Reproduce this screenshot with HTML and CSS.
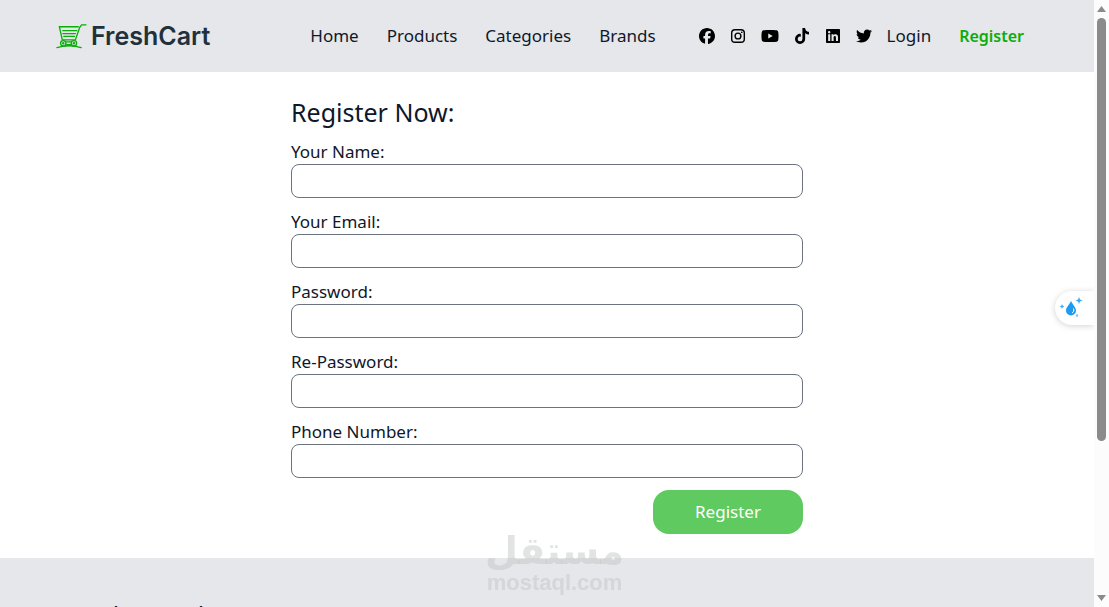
FILE: index.html
```html
<!DOCTYPE html>
<html lang="en">
	<head>
		<meta charset="UTF-8">
		<title>FreshCart</title>
		<link rel="stylesheet" href="styles.css">
	</head>
	<body>
		<div class="page">
			<header class="navbar">
				<a class="logo" href="#">
					<svg width="31" height="26" viewBox="0 0 32 26" fill="none" stroke="#0aad0a" stroke-width="1.4" stroke-linecap="round">
						<path d="M31 1.500h-4.500l-2 2.500-4.500 13H6.500L3.500 3.500H23"/>
						<path d="M7 7.500h14.500M7 10.500h13M8 13.500h11" stroke-width="1.300"/>
						<circle cx="7.500" cy="20.500" r="2.800"/>
						<circle cx="18.500" cy="20.500" r="2.800"/>
						<circle cx="7.500" cy="20.500" r=".6"/>
						<circle cx="18.500" cy="20.500" r=".6"/>
						<path d="M11 19h4.500M11 22h4.500M1 25c7-2.400 18-2.400 25 0"/>
					</svg>
					<span>FreshCart</span>
				</a>
				<nav class="menu">
					<a href="#">Home</a>
					<a href="#">Products</a>
					<a href="#">Categories</a>
					<a href="#">Brands</a>
				</nav>
				<div class="social">
					<a href="#" aria-label="Facebook"><svg viewBox="0 0 512 512"><path d="M512 256C512 114.600 397.400 0 256 0S0 114.600 0 256c0 120 82.700 220.800 194.200 248.500V334.200h-52.800V256h52.800v-33.700c0-87.100 39.400-127.500 125-127.500 16.200 0 44.200 3.200 55.700 6.400V172c-6-.6-16.500-1-29.600-1-42 0-58.200 15.900-58.200 57.200V256h83.600l-14.400 78.200h-69.300v175.900C413.800 494.800 512 386.900 512 256z"/></svg></a>
					<a href="#" aria-label="Instagram"><svg viewBox="0 0 512 512" fill="none" stroke="#000" stroke-width="45"><rect x="54" y="54" width="404" height="404" rx="105"/><circle cx="256" cy="256" r="93"/><circle cx="376" cy="136" r="27" fill="#000" stroke="none"/></svg></a>
					<a href="#" aria-label="YouTube"><svg class="wide" viewBox="0 0 576 512"><path d="M549.700 124.100c-6.300-23.700-24.800-42.300-48.300-48.600C458.800 64 288 64 288 64S117.200 64 74.600 75.500c-23.500 6.300-42 24.900-48.300 48.600-11.400 42.900-11.400 132.300-11.400 132.300s0 89.400 11.400 132.300c6.300 23.700 24.800 41.500 48.300 47.800C117.200 448 288 448 288 448s170.800 0 213.400-11.500c23.500-6.300 42-24.200 48.300-47.800 11.400-42.900 11.400-132.300 11.400-132.300s0-89.400-11.400-132.300zm-317.500 213.500V175.200l142.700 81.200-142.700 81.200z"/></svg></a>
					<a href="#" aria-label="TikTok"><svg viewBox="0 0 448 512"><path d="M448 209.900a210.100 210.100 0 0 1-122.800-39.300v178.800A162.600 162.600 0 1 1 185 188.300v89.900a74.600 74.600 0 1 0 52.200 71.200V0h88a121.200 121.200 0 0 0 1.900 22.200 122.200 122.200 0 0 0 53.900 80.200 121.400 121.400 0 0 0 67 20.100z"/></svg></a>
					<a href="#" aria-label="LinkedIn"><svg viewBox="0 0 448 512"><path d="M416 32H31.900C14.300 32 0 46.500 0 64.300v383.400C0 465.500 14.300 480 31.900 480H416c17.600 0 32-14.500 32-32.300V64.300c0-17.800-14.400-32.300-32-32.300zM135.400 416H69V202.200h66.500V416zm-33.200-243c-21.300 0-38.500-17.300-38.500-38.500S80.900 96 102.200 96c21.200 0 38.500 17.300 38.500 38.500 0 21.300-17.200 38.500-38.500 38.500zm282.100 243h-66.400V312c0-24.800-.5-56.700-34.500-56.700-34.600 0-39.900 27-39.900 54.900V416h-66.400V202.200h63.700v29.200h.9c8.900-16.800 30.600-34.500 62.900-34.500 67.200 0 79.700 44.300 79.700 101.900V416z"/></svg></a>
					<a href="#" aria-label="Twitter"><svg viewBox="0 0 512 512"><path d="M459.400 151.700c.3 4.500.3 9.100.3 13.600 0 138.700-105.600 298.600-298.600 298.600-59.500 0-114.700-17.200-161.100-47.100 8.400 1 16.600 1.300 25.300 1.300 49.100 0 94.200-16.600 130.300-44.800-46.100-1-84.800-31.200-98.100-72.800 6.500 1 13 1.600 19.800 1.600 9.400 0 18.800-1.300 27.600-3.600-48.100-9.700-84.100-52-84.100-103v-1.300c14 7.800 30.200 12.700 47.400 13.300-28.300-18.800-46.800-51-46.800-87.400 0-19.500 5.200-37.400 14.300-53 51.700 63.700 129.300 105.300 216.400 109.800-1.600-7.800-2.600-15.900-2.600-24 0-57.800 46.800-104.900 104.900-104.900 30.200 0 57.500 12.700 76.700 33.100 23.700-4.500 46.500-13.300 66.600-25.300-7.800 24.400-24.400 44.800-46.100 57.800 21.100-2.300 41.600-8.100 60.400-16.200-14.300 20.800-32.200 39.300-52.600 54.300z"/></svg></a>
				</div>
				<nav class="menu account">
					<a href="#">Login</a>
					<a class="active" href="#">Register</a>
				</nav>
			</header>

			<main>
				<form class="register">
					<h1>Register Now:</h1>
					<div class="field">
						<label for="name">Your Name:</label>
						<input type="text" id="name">
					</div>
					<div class="field">
						<label for="email">Your Email:</label>
						<input type="email" id="email">
					</div>
					<div class="field">
						<label for="password">Password:</label>
						<input type="password" id="password">
					</div>
					<div class="field">
						<label for="rePassword">Re-Password:</label>
						<input type="password" id="rePassword">
					</div>
					<div class="field">
						<label for="phone">Phone Number:</label>
						<input type="tel" id="phone">
					</div>
					<button type="submit">Register</button>
				</form>
			</main>

			<footer>
				<h2>Get the FreshCart app</h2>
			</footer>
		</div>

		<div class="scrollbar">
			<svg width="9" height="6" viewBox="0 0 9 6"><path d="M0 6L4.500 0 9 6z"/></svg>
			<div class="track"><div class="thumb"></div></div>
			<svg width="9" height="6" viewBox="0 0 9 6"><path d="M0 0L4.500 6 9 0z"/></svg>
		</div>

		<div class="widget">
			<svg width="24" height="22" viewBox="0 0 24 22" fill="#1d9bf0">
				<path d="M12 4c-2 4-5 6.500-5 9.500a5 5 0 0 0 10 0C17 10.500 14 8 12 4z"/>
				<path d="M14.500 11.500c.8 2 .3 3.500-1.500 4.500" fill="none" stroke="#fff"/>
				<path d="M20 0l1 2.500 2.500 1-2.500 1-1 2.500-1-2.500-2.500-1 2.500-1zM3 7l.7 1.800 1.800.7-1.800.7L3 12l-.7-1.800L.5 9.500l1.800-.7z" opacity=".85"/>
				<circle cx="18" cy="18.500" r="1.200" opacity=".6"/>
			</svg>
		</div>

		<div class="watermark">
			<span class="arabic" lang="ar" dir="rtl">مستقل</span>
			<span>mostaql.com</span>
		</div>
	</body>
</html>
```
FILE: styles.css
```css
*{
	box-sizing: border-box;
	margin: 0;
	padding: 0;
}
body{
	display: flex;
	height: 100vh;
	overflow: hidden;
	font: 17px/24px "Noto Sans", sans-serif;
	color: #0f172a;
	background: #fff;
}
a{
	color: inherit;
	text-decoration: none;
}
.page{
	flex: 1;
	min-width: 0;
	overflow: hidden;
}

/* navbar */
.navbar{
	display: flex;
	align-items: center;
	height: 72px;
	padding: 0 56px;
	background: #e5e7eb;
}
.logo{
	display: flex;
	align-items: center;
	gap: 4px;
	margin-right: 100px;
	font: 600 25px/32px Inter, sans-serif;
	color: #21313c;
}
.menu{
	display: flex;
	gap: 28px;
}
.social{
	display: flex;
	align-items: center;
	gap: 15px;
	margin: 0 15px 0 43px;
}
.social a{
	display: flex;
}
.social svg{
	width: 16px;
	height: 16px;
}
.social .wide{
	width: 18px;
}
.menu .active{
	font-weight: 600;
	font-size: 16px;
	color: #0aad0a;
}

/* register form */
.register{
	display: flex;
	flex-direction: column;
	gap: 12px;
	max-width: 512px;
	margin: 0 auto;
	padding: 24px 0;
}
.register h1{
	font-size: 25px;
	font-weight: 400;
	line-height: 32px;
}
.field{
	display: flex;
	flex-direction: column;
}
.field input{
	height: 34px;
	padding: 4px 8px;
	border: 1px solid #6b7280;
	border-radius: 8px;
	font: inherit;
	background: #fff;
}
.register button{
	align-self: flex-end;
	width: 150px;
	height: 44px;
	border: 0;
	border-radius: 16px;
	font: inherit;
	color: #fff;
	background: #5fca5f;
}

footer{
	padding: 41px 56px;
	background: #e5e7eb;
}
footer h2{
	font-size: 25px;
	font-weight: 400;
	line-height: 32px;
}

/* scrollbar */
.scrollbar{
	display: flex;
	flex-direction: column;
	align-items: center;
	gap: 6px;
	width: 15px;
	padding: 6px 0;
	background: #fcfcfc;
}
.scrollbar svg{
	fill: #8b8b8b;
}
.track{
	flex: 1;
}
.thumb{
	width: 9px;
	height: 74%;
	border-radius: 5px;
	background: #8b8b8b;
}

.widget{
	position: fixed;
	top: 291px;
	right: 15px;
	display: flex;
	align-items: center;
	width: 39px;
	height: 34px;
	padding-left: 4px;
	border-radius: 17px 0 0 17px;
	background: #fff;
	box-shadow: 0 1px 6px rgba(0,0,0,.18);
	clip-path: inset(-10px 0 -10px -10px);
}

.watermark{
	position: fixed;
	left: 0;
	right: 0;
	bottom: 12px;
	display: flex;
	flex-direction: column;
	align-items: center;
	font: 700 22px/24px "Liberation Sans", sans-serif;
	color: rgba(190,192,192,.45);
	pointer-events: none;
}
.arabic{
	font: 700 38px/40px "DejaVu Sans", sans-serif;
}
```
